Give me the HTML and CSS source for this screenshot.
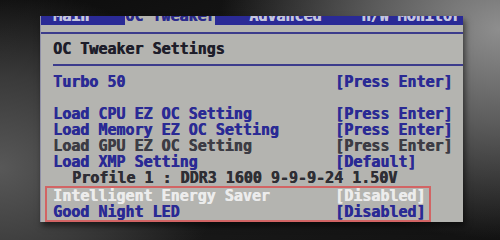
FILE: index.html
```html
<!DOCTYPE html>
<html>
<head>
<meta charset="utf-8">
<link rel="stylesheet" href="styles.css">
</head>
<body>
<div class="panel">
  <div class="tabs">
    <span class="tab t-main">Main</span>
    <span class="tab active">OC Tweaker</span>
    <span class="tab t-adv">Advanced</span>
    <span class="tab t-hw">H/W Monitor</span>
  </div>
  <div class="body">
    <div class="heading">OC Tweaker Settings</div>
    <div class="list">
      <div class="row"><span>Turbo 50</span><span>[Press Enter]</span></div>
      <div class="row"></div>
      <div class="row"><span>Load CPU EZ OC Setting</span><span>[Press Enter]</span></div>
      <div class="row"><span>Load Memory EZ OC Setting</span><span>[Press Enter]</span></div>
      <div class="row dim"><span>Load GPU EZ OC Setting</span><span>[Press Enter]</span></div>
      <div class="row"><span>Load XMP Setting</span><span>[Default]</span></div>
      <div class="row info"><span>Profile 1 : DDR3 1600 9-9-9-24 1.50V</span></div>
      <div class="boxed">
        <div class="row sel"><span>Intelligent Energy Saver</span><span>[Disabled]</span></div>
        <div class="row"><span>Good Night LED</span><span>[Disabled]</span></div>
      </div>
    </div>
  </div>
</div>
</body>
</html>
```
FILE: styles.css
```css
html, body {
  margin: 0;
  padding: 0;
}
body {
  width: 500px;
  height: 240px;
  overflow: hidden;
  background:
    radial-gradient(ellipse 280px 210px at 100% 12%, #8e8e8e 0%, #5c5c5c 45%, rgba(40,40,40,0) 100%),
    radial-gradient(ellipse 220px 180px at 0% 70%, #585858 0%, #3a3a3a 50%, rgba(30,30,30,0) 100%),
    linear-gradient(160deg, #0c0c0c 0%, #1c1c1c 50%, #121212 100%);
  font-family: "DejaVu Sans Mono", "Liberation Mono", monospace;
  font-weight: bold;
  font-size: 15px;
}
.panel {
  margin: 16px 0 0 40px;
  width: 423px;
  height: 206px;
  background: #b4b4b0;
  box-shadow: 2px 4px 6px rgba(0,0,0,0.55);
  border-left: 1px solid #9090a8;
  box-sizing: border-box;
  overflow: hidden;
  text-shadow: 0.6px 0 currentColor;
}
.tabs {
  height: 9px;
  background: #2a2a96;
  display: flex;
  align-items: flex-start;
  overflow: hidden;
}
.tab {
  color: #c4c4de;
  margin-top: -8px;
  padding-bottom: 8px;
  line-height: 16px;
  white-space: pre;
}
.t-main { margin-left: 12px; }
.active {
  margin-left: 36px;
  background: #b4b4b0;
  color: #2a2a8c;
  width: 90px;
}
.t-adv { margin-left: 34px; }
.t-hw { margin-left: 40px; }
.body {
  margin-top: 7px;
  border-top: 2px solid #3c3c8c;
}
.heading {
  color: #1e1e2a;
  height: 30px;
  line-height: 30px;
  margin-left: 12px;
  border-bottom: 2px solid #3c3c8c;
}
.list {
  margin: 8px 0 0 12px;
  color: #2a2a94;
}
.row {
  height: 16px;
  line-height: 16px;
  display: grid;
  grid-template-columns: 282px auto;
  white-space: pre;
}
.dim { color: #3c3c44; }
.info {
  color: #2e2e34;
  padding-left: 19px;
}
.boxed {
  margin: 0 0 0 -8px;
  width: 386px;
  border: 2px solid #d26464;
  box-sizing: border-box;
  padding-left: 6px;
}
.sel { color: #ececec; }
```
